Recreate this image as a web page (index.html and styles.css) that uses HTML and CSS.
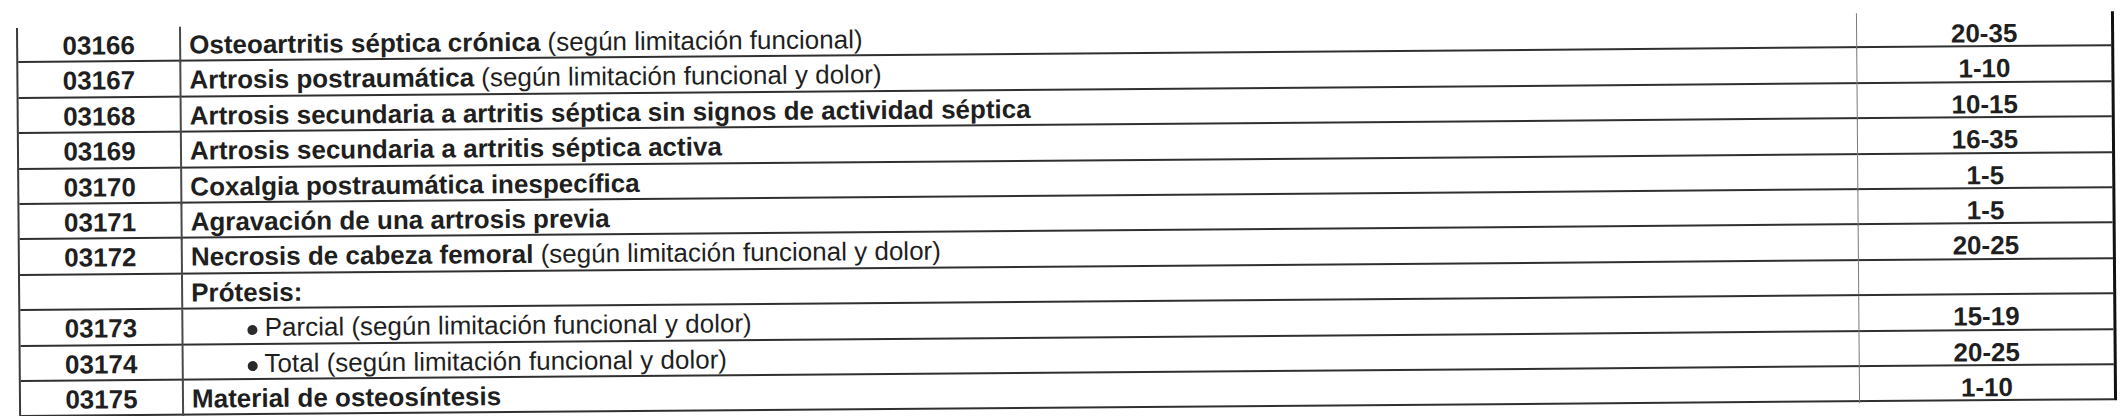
FILE: index.html
```html
<!DOCTYPE html>
<html lang="es">
<head>
<meta charset="utf-8">
<title>Baremo</title>
<link rel="stylesheet" href="styles.css">
</head>
<body>
<div class="sheet">
  <div class="table">
    <div class="row"><div class="code">03166</div><div class="desc"><b>Osteoartritis séptica crónica</b> (según limitación funcional)</div><div class="val">20-35</div></div>
    <div class="row"><div class="code">03167</div><div class="desc"><b>Artrosis postraumática</b> (según limitación funcional y dolor)</div><div class="val">1-10</div></div>
    <div class="row"><div class="code">03168</div><div class="desc"><b>Artrosis secundaria a artritis séptica sin signos de actividad séptica</b></div><div class="val">10-15</div></div>
    <div class="row"><div class="code">03169</div><div class="desc"><b>Artrosis secundaria a artritis séptica activa</b></div><div class="val">16-35</div></div>
    <div class="row"><div class="code">03170</div><div class="desc"><b>Coxalgia postraumática inespecífica</b></div><div class="val">1-5</div></div>
    <div class="row"><div class="code">03171</div><div class="desc"><b>Agravación de una artrosis previa</b></div><div class="val">1-5</div></div>
    <div class="row"><div class="code">03172</div><div class="desc"><b>Necrosis de cabeza femoral</b> (según limitación funcional y dolor)</div><div class="val">20-25</div></div>
    <div class="row"><div class="code"></div><div class="desc"><b>Prótesis:</b></div><div class="val"></div></div>
    <div class="row"><div class="code">03173</div><div class="desc sub"><span class="dot"></span> Parcial (según limitación funcional y dolor)</div><div class="val">15-19</div></div>
    <div class="row"><div class="code">03174</div><div class="desc sub"><span class="dot"></span> Total (según limitación funcional y dolor)</div><div class="val">20-25</div></div>
    <div class="row"><div class="code">03175</div><div class="desc"><b>Material de osteosíntesis</b></div><div class="val">1-10</div></div>
  </div>
</div>
</body>
</html>
```
FILE: styles.css
```css
html, body {
  margin: 0;
  padding: 0;
  background: #ffffff;
}
body {
  width: 2126px;
  height: 416px;
  overflow: hidden;
  font-family: "Liberation Sans", Arial, sans-serif;
  color: #1f1f1f;
}
.sheet {
  padding: 28px 0 0 16px;
}
.table {
  width: 2098px;
  border-left: 2px solid #3a3a3a;
  border-right: 3px solid #111111;
  box-sizing: border-box;
  transform: rotate(-0.46deg);
  transform-origin: 0 0;
}
.row {
  display: grid;
  grid-template-columns: 163px 1676px 1fr;
  height: 35.4px;
  box-sizing: border-box;
  border-bottom: 2px solid #303030;
  font-size: 26px;
  line-height: 30px;
}
.code {
  border-right: 2px solid #4a4a4a;
  font-weight: bold;
  text-align: center;
  padding-top: 3px;
}
.desc {
  border-right: 1px solid #7a7a7a;
  padding: 3px 0 0 8px;
  white-space: nowrap;
}
.desc b {
  font-weight: bold;
}
.desc.sub {
  padding-left: 64px;
}
.dot {
  display: inline-block;
  width: 10px;
  height: 10px;
  border-radius: 50%;
  background: #2a2a2a;
  vertical-align: 1px;
}
.val {
  font-weight: bold;
  text-align: center;
  padding-top: 6px;
}
```
